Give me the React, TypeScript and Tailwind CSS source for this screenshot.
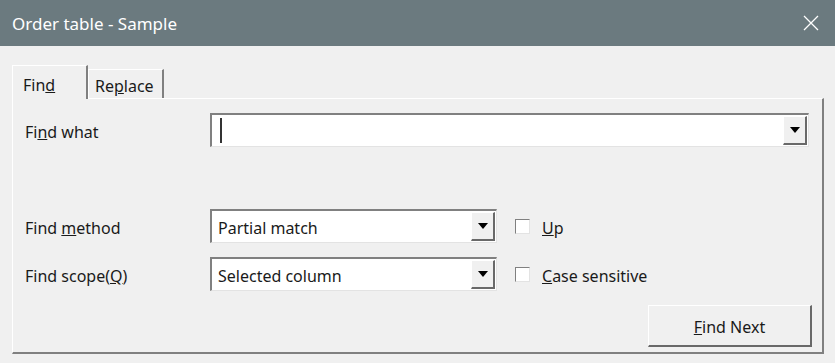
import React from "react";

function Arrow() {
  return (
    <svg width="10" height="6" viewBox="0 0 10 6">
      <path d="M0 0h10L5 6z" fill="#000" />
    </svg>
  );
}

function DropButton() {
  return (
    <div className="w-[24px] h-full flex items-center justify-center bg-[#f0f0f0] border-t border-l border-[#ffffff] border-r-2 border-b-2 border-r-[#696969] border-b-[#696969]">
      <Arrow />
    </div>
  );
}

function Combo({ width, text, caret }: { width: string; text?: string; caret?: boolean }) {
  return (
    <div
      className={`${width} h-[34px] flex bg-white border-t-2 border-l-2 border-t-[#808080] border-l-[#808080] border-b border-r border-b-[#e3e3e3] border-r-[#e3e3e3] p-[1px]`}
    >
      <div className="flex-1 flex items-center pl-[5px] pt-[2px] text-[16px] text-[#1a1a1a]">
        {caret && <div className="w-[2px] h-[25px] -mt-[2px] bg-[#333] ml-[2px]" />}
        {text}
      </div>
      <DropButton />
    </div>
  );
}

function Check({ children }: { children: React.ReactNode }) {
  return (
    <div className="flex items-center gap-[12px] ml-[18px]">
      <div className="w-[15px] h-[15px] bg-white border border-[#808080] border-r-[#e3e3e3] border-b-[#e3e3e3]" />
      <span className="text-[16px] text-[#1a1a1a] pt-[4px]">{children}</span>
    </div>
  );
}

export default function App() {
  return (
    <div className="w-[835px] h-[363px] bg-[#f0f0f0] flex flex-col" style={{ fontFamily: '"Noto Sans", "Open Sans", sans-serif' }}>
      <div className="h-[46px] bg-[#6b7a7f] flex items-center justify-between pl-[12px] pr-[16px]">
        <span className="text-white text-[17px] pt-[2px]">Order table - Sample</span>
        <svg width="16" height="16" viewBox="0 0 16 16">
          <path d="M1 1l14 14M15 1L1 15" stroke="#fff" strokeWidth="1.3" />
        </svg>
      </div>

      <div className="flex-1 flex flex-col pl-[12px] pr-[11px] pt-[19px] pb-[9px]">
        <div className="h-[33px] flex items-end relative z-10">
          <div className="w-[76px] h-[34px] -mb-[1px] bg-[#f0f0f0] border-t border-l border-white border-r-2 border-r-[#808080] flex items-center pl-[10px] pt-[4px] text-[16px] text-[#1a1a1a]">
            <span>Fin<u>d</u></span>
          </div>
          <div className="w-[76px] h-[29px] bg-[#f0f0f0] border-t border-l border-white border-r-2 border-r-[#808080] flex items-center pl-[6px] pt-[3px] text-[16px] text-[#1a1a1a]">
            <span>Re<u>p</u>lace</span>
          </div>
        </div>

        <div className="flex-1 flex flex-col border-t border-l border-white border-r-2 border-b-2 border-r-[#808080] border-b-[#808080] pl-[12px] pr-[10px] pt-[14px]">
          <div className="flex items-center">
            <span className="w-[185px] text-[16px] text-[#1a1a1a] pt-[4px]">Fi<u>n</u>d what</span>
            <Combo width="w-[599px]" caret />
          </div>

          <div className="flex items-center mt-[62px]">
            <span className="w-[185px] text-[16px] text-[#1a1a1a] pt-[4px]">Find <u>m</u>ethod</span>
            <Combo width="w-[287px]" text="Partial match" />
            <Check><u>U</u>p</Check>
          </div>

          <div className="flex items-center mt-[14px]">
            <span className="w-[185px] text-[16px] text-[#1a1a1a] pt-[4px]">Find scope(<u>Q</u>)</span>
            <Combo width="w-[287px]" text="Selected column" />
            <Check><u>C</u>ase sensitive</Check>
          </div>

          <div className="flex justify-end mt-[14px]">
            <button className="w-[164px] h-[42px] bg-[#f0f0f0] border-t border-l border-white border-r-2 border-b-2 border-r-[#696969] border-b-[#696969] text-[16px] text-[#1a1a1a] pt-[2px]">
              <u>F</u>ind Next
            </button>
          </div>
        </div>
      </div>
    </div>
  );
}
